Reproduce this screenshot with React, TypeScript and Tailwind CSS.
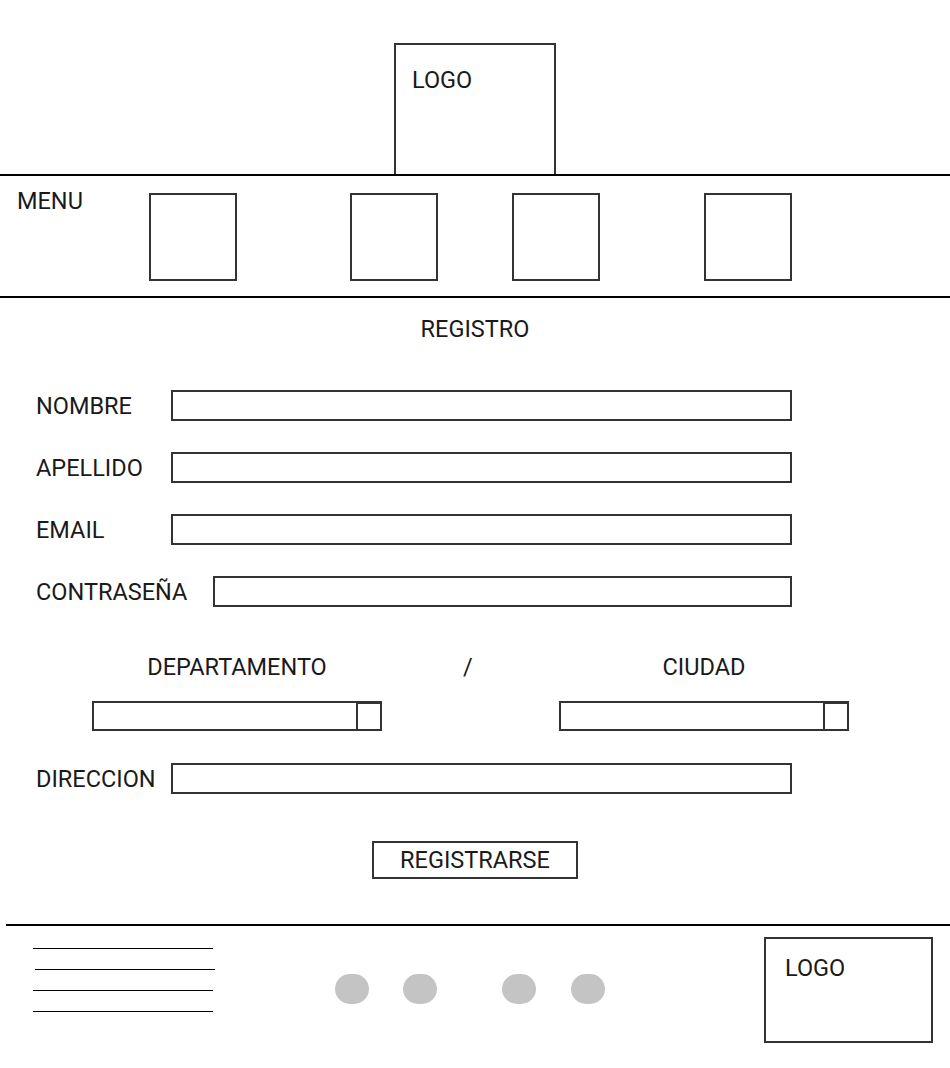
const MENU_GAPS = ["ml-0", "ml-[113px]", "ml-[74px]", "ml-[104px]"];

const FIELDS_TOP = [
  { label: "NOMBRE", labelW: "w-[135px]", inputW: "w-[621px]" },
  { label: "APELLIDO", labelW: "w-[135px]", inputW: "w-[621px]" },
  { label: "EMAIL", labelW: "w-[135px]", inputW: "w-[621px]" },
  { label: "CONTRASEÑA", labelW: "w-[177px]", inputW: "w-[579px]" },
];

function TextInput({ width }: { width: string }) {
  return <div className={`${width} h-[31px] border-2 border-[#333] bg-white`} />;
}

function SelectBox() {
  return (
    <div className="flex h-[30px] w-[290px] border-2 border-[#333] bg-white">
      <div className="flex-1" />
      <div className="w-[24px] border-l-2 border-t border-[#333]" />
    </div>
  );
}

export default function App() {
  return (
    <div className="h-[1068px] w-[950px] bg-white font-['Roboto',sans-serif] text-[23.5px] leading-[26px] text-[#1a1a1a]">
      {/* Header */}
      <header className="pt-[43px]">
        <div className="mx-auto h-[131px] w-[162px] border-2 border-b-0 border-[#333] pl-4 pt-[22px]">
          LOGO
        </div>
      </header>

      {/* Menu */}
      <nav className="flex h-[124px] items-start border-y-2 border-black pl-[17px]">
        <div className="w-[132px] shrink-0 pt-[12px]">MENU</div>
        {MENU_GAPS.map((gap, i) => (
          <div
            key={i}
            className={`${gap} mt-[17px] h-[88px] w-[88px] shrink-0 border-2 border-[#333]`}
          />
        ))}
      </nav>

      {/* Form */}
      <main className="pt-[18px]">
        <h1 className="text-center">REGISTRO</h1>

        <div className="mt-[48px] flex flex-col gap-[31px] pl-[36px]">
          {FIELDS_TOP.map((f) => (
            <div key={f.label} className="flex items-center">
              <span className={`${f.labelW} shrink-0`}>{f.label}</span>
              <TextInput width={f.inputW} />
            </div>
          ))}
        </div>

        <div className="mt-[47px] flex pl-[92px]">
          <div className="flex w-[290px] flex-col items-center gap-[21px]">
            <span>DEPARTAMENTO</span>
            <SelectBox />
          </div>
          <div className="w-[177px] pl-[81px]">/</div>
          <div className="flex w-[290px] flex-col items-center gap-[21px]">
            <span>CIUDAD</span>
            <SelectBox />
          </div>
        </div>

        <div className="mt-[32px] flex items-center pl-[36px]">
          <span className="w-[135px] shrink-0">DIRECCION</span>
          <TextInput width="w-[621px]" />
        </div>

        <div className="mt-[47px] flex justify-center">
          <button className="h-[38px] w-[206px] border-2 border-[#333] bg-white">
            REGISTRARSE
          </button>
        </div>
      </main>

      {/* Footer */}
      <footer className="ml-[6px] mt-[45px] flex items-start border-t-2 border-black">
        <div className="ml-[27px] flex w-[182px] flex-col gap-[20px] pt-[22px]">
          <div className="h-px w-[180px] bg-black" />
          <div className="ml-[2px] h-px w-[180px] bg-black" />
          <div className="h-px w-[180px] bg-black" />
          <div className="h-px w-[180px] bg-black" />
        </div>
        <div className="ml-[120px] mt-[48px] flex">
          <span className="h-[30px] w-[34px] rounded-full bg-[#c4c4c4]" />
          <span className="ml-[34px] h-[30px] w-[34px] rounded-full bg-[#c4c4c4]" />
          <span className="ml-[65px] h-[30px] w-[34px] rounded-full bg-[#c4c4c4]" />
          <span className="ml-[35px] h-[30px] w-[34px] rounded-full bg-[#c4c4c4]" />
        </div>
        <div className="ml-[159px] mt-[11px] h-[106px] w-[169px] border-2 border-[#333] pl-[19px] pt-[16px]">
          LOGO
        </div>
      </footer>
    </div>
  );
}
